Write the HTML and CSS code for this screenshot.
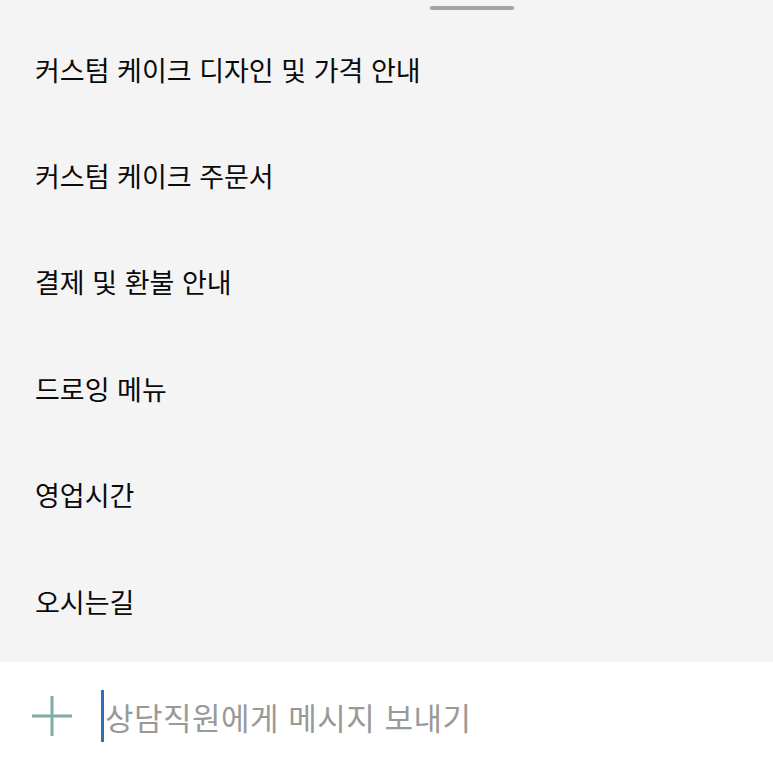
FILE: index.html
```html
<!DOCTYPE html>
<html lang="ko">
<head>
<meta charset="utf-8">
<link rel="stylesheet" href="styles.css">
</head>
<body>
<div class="sheet">
  <div class="handle-row"><div class="handle"></div></div>
  <ul class="menu">
    <li class="item">커스텀 케이크 디자인 및 가격 안내</li>
    <li class="item">커스텀 케이크 주문서</li>
    <li class="item">결제 및 환불 안내</li>
    <li class="item">드로잉 메뉴</li>
    <li class="item">영업시간</li>
    <li class="item">오시는길</li>
  </ul>
</div>
<div class="composer">
  <svg class="plus" width="44" height="44" viewBox="0 0 44 44"><path d="M22 2V42M2 22H42" stroke="#7eada3" stroke-width="3" fill="none"/></svg>
  <div class="input"><span class="caret"></span><span class="placeholder">상담직원에게 메시지 보내기</span></div>
</div>
</body>
</html>
```
FILE: styles.css
```css
html, body {
  margin: 0;
  padding: 0;
  width: 773px;
  height: 770px;
  overflow: hidden;
  font-family: "Noto Sans CJK KR", "Noto Sans", sans-serif;
  background: #ffffff;
}
.sheet {
  background: #f4f4f4;
  height: 662px;
  display: flex;
  flex-direction: column;
}
.handle-row {
  display: flex;
  justify-content: center;
  padding-top: 6px;
  padding-left: 170px;
  height: 10px;
}
.handle {
  width: 84px;
  height: 4px;
  border-radius: 2px;
  background: #a3a3a3;
}
.menu {
  list-style: none;
  margin: 0;
  padding: 0;
}
.item {
  height: 106.4px;
  display: flex;
  align-items: center;
  padding-left: 35px;
  font-size: 27px;
  color: #0a0a0a;
}
.composer {
  height: 108px;
  display: flex;
  align-items: center;
  padding-left: 30px;
}
.plus { margin-right: 27px; flex: none; }
.input {
  display: flex;
  align-items: center;
}
.caret {
  width: 3px;
  height: 52px;
  background: #2f6fb5;
  margin-right: 1px;
}
.placeholder {
  font-size: 31px;
  letter-spacing: 0.5px;
  color: #999999;
}
```
